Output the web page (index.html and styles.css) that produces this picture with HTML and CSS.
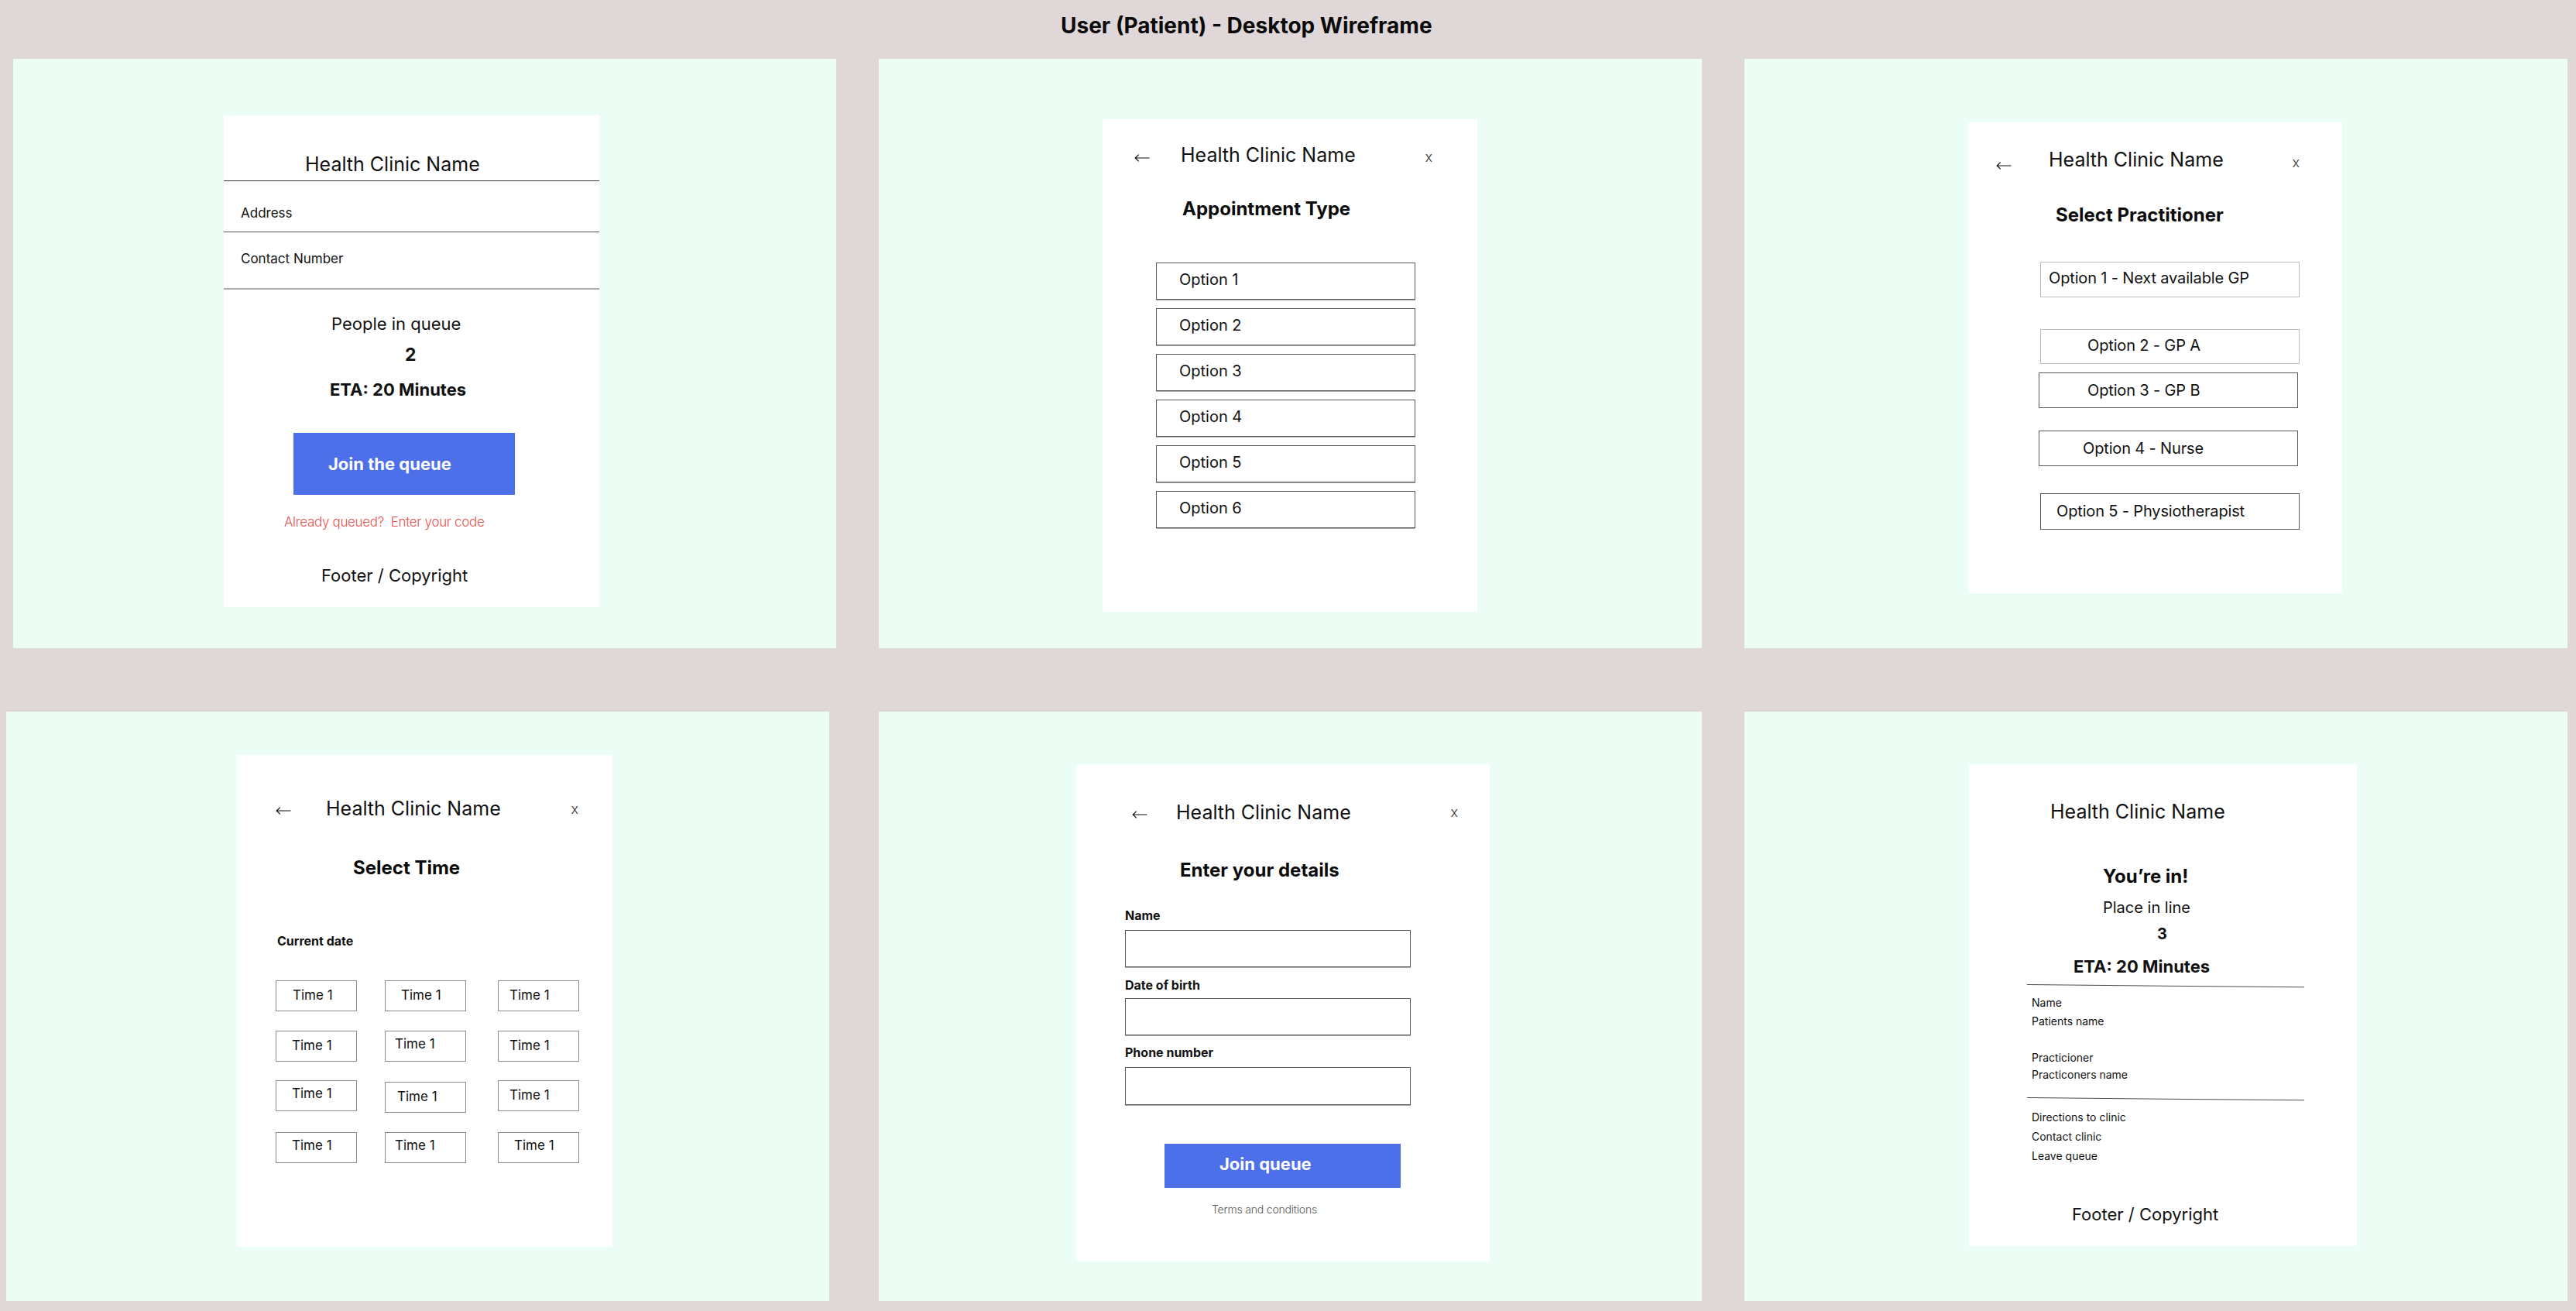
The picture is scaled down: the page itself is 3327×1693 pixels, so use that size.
FILE: index.html
```html
<!DOCTYPE html>
<html lang="en">
<head>
<meta charset="utf-8">
<title>User (Patient) - Desktop Wireframe</title>
<link rel="stylesheet" href="styles.css">
</head>
<body>
<h1 class="page-title">User (Patient) - Desktop Wireframe</h1>

<div class="row row-top">
  <section class="panel">
    <div class="card card-1">
      <div class="c1-title">Health Clinic Name</div>
      <div class="c1-row c1-address">Address</div>
      <div class="c1-row c1-contact">Contact Number</div>
      <div class="c1-people">People in queue</div>
      <div class="c1-count">2</div>
      <div class="eta c1-eta">ETA: 20 Minutes</div>
      <div class="btn c1-btn">Join the queue</div>
      <div class="c1-already">Already queued?&nbsp; Enter your code</div>
      <div class="footer c1-footer">Footer / Copyright</div>
    </div>
  </section>

  <section class="panel">
    <div class="card card-2">
      <div class="nav">
        <svg class="nav-back" viewBox="0 0 20 12"><path d="M19.5 6H1.2M5.8 1.6L1.2 6l4.6 4.4" fill="none" stroke="#111" stroke-width="1.2"/></svg>
        <span class="nav-title">Health Clinic Name</span>
        <span class="nav-close">x</span>
      </div>
      <div class="heading">Appointment Type</div>
      <div class="options">
        <div class="option">Option 1</div>
        <div class="option">Option 2</div>
        <div class="option">Option 3</div>
        <div class="option">Option 4</div>
        <div class="option">Option 5</div>
        <div class="option">Option 6</div>
      </div>
    </div>
  </section>

  <section class="panel">
    <div class="card card-3">
      <div class="nav">
        <svg class="nav-back" viewBox="0 0 20 12"><path d="M19.5 6H1.2M5.8 1.6L1.2 6l4.6 4.4" fill="none" stroke="#111" stroke-width="1.2"/></svg>
        <span class="nav-title">Health Clinic Name</span>
        <span class="nav-close">x</span>
      </div>
      <div class="heading">Select Practitioner</div>
      <div class="prac prac-1">Option 1 - Next available GP</div>
      <div class="prac prac-2">Option 2 - GP A</div>
      <div class="prac prac-3">Option 3 - GP B</div>
      <div class="prac prac-4">Option 4 - Nurse</div>
      <div class="prac prac-5">Option 5 - Physiotherapist</div>
    </div>
  </section>
</div>

<div class="row row-bottom">
  <section class="panel">
    <div class="card card-4">
      <div class="nav">
        <svg class="nav-back" viewBox="0 0 20 12"><path d="M19.5 6H1.2M5.8 1.6L1.2 6l4.6 4.4" fill="none" stroke="#111" stroke-width="1.2"/></svg>
        <span class="nav-title">Health Clinic Name</span>
        <span class="nav-close">x</span>
      </div>
      <div class="heading">Select Time</div>
      <div class="date-label">Current date</div>
      <div class="time-grid">
        <div class="time tp-22">Time 1</div>
        <div class="time tp-21">Time 1</div>
        <div class="time tp-15">Time 1</div>
        <div class="time tp-21">Time 1</div>
        <div class="time tp-13 tv-up">Time 1</div>
        <div class="time tp-15">Time 1</div>
        <div class="time tp-21 tv-up">Time 1</div>
        <div class="time tp-16 time-low">Time 1</div>
        <div class="time tp-15">Time 1</div>
        <div class="time tp-21 tv-up">Time 1</div>
        <div class="time tp-13 tv-up">Time 1</div>
        <div class="time tp-21 tv-up">Time 1</div>
      </div>
    </div>
  </section>

  <section class="panel">
    <div class="card card-5">
      <div class="nav">
        <svg class="nav-back" viewBox="0 0 20 12"><path d="M19.5 6H1.2M5.8 1.6L1.2 6l4.6 4.4" fill="none" stroke="#111" stroke-width="1.2"/></svg>
        <span class="nav-title">Health Clinic Name</span>
        <span class="nav-close">x</span>
      </div>
      <div class="heading">Enter your details</div>
      <div class="field-label fl-name">Name</div>
      <div class="field-input fi-name"></div>
      <div class="field-label fl-dob">Date of birth</div>
      <div class="field-input fi-dob"></div>
      <div class="field-label fl-phone">Phone number</div>
      <div class="field-input fi-phone"></div>
      <div class="btn c5-btn">Join queue</div>
      <div class="terms">Terms and conditions</div>
    </div>
  </section>

  <section class="panel">
    <div class="card card-6">
      <div class="c6-title">Health Clinic Name</div>
      <div class="heading">You’re in!</div>
      <div class="c6-place">Place in line</div>
      <div class="c6-count">3</div>
      <div class="eta c6-eta">ETA: 20 Minutes</div>
      <div class="divider dv-1"></div>
      <div class="detail d-name">Name</div>
      <div class="detail d-pname">Patients name</div>
      <div class="detail d-prac">Practicioner</div>
      <div class="detail d-pracname">Practiconers name</div>
      <div class="divider dv-2"></div>
      <div class="detail d-dir">Directions to clinic</div>
      <div class="detail d-contact">Contact clinic</div>
      <div class="detail d-leave">Leave queue</div>
      <div class="footer c6-footer">Footer / Copyright</div>
    </div>
  </section>
</div>
</body>
</html>
```

FILE: styles.css
```css
html, body {
  margin: 0;
  padding: 0;
}
body {
  width: 3327px;
  height: 1693px;
  overflow: hidden;
  background: #E0D8D8;
  font-family: Inter, "Noto Sans", "Liberation Sans", sans-serif;
  color: #111;
  white-space: nowrap;
}

.page-title {
  margin: 0;
  padding: 15px 0 25px 1370px;
  font-size: 28px;
  line-height: 36px;
  font-weight: 700;
  color: #0b0b0b;
}

.row {
  display: flex;
  gap: 55px;
}
.row-top { padding-left: 17px; }
.row-bottom { padding-left: 8px; margin-top: 82px; }
.row-bottom .panel:first-child { margin-right: 9px; }

.panel {
  flex: none;
  width: 1063px;
  height: 761px;
  background: #EBFDF5;
  display: flex;
  align-items: flex-start;
}

.card {
  flex: none;
  background: #fff;
  box-sizing: border-box;
  display: flex;
  flex-direction: column;
}
.card-1 { width: 485px; height: 635px; margin: 73px 0 0 272px; }
.card-2 { width: 484px; height: 636px; margin: 78px 0 0 289px; }
.card-3 { width: 483px; height: 608px; margin: 82px 0 0 289px; }
.card-4 { width: 485px; height: 635px; margin: 56px 0 0 298px; }
.card-5 { width: 534px; height: 642px; margin: 68px 0 0 255px; }
.card-6 { width: 501px; height: 622px; margin: 68px 0 0 290px; }

/* ---------- card 1 ---------- */
.c1-title {
  padding: 48px 0 6px 105px;
  font-size: 25px;
  line-height: 30px;
  border-bottom: 1px solid #333;
}
.c1-row {
  font-size: 17px;
  line-height: 24px;
  padding-left: 22px;
}
.c1-address {
  padding-top: 29px;
  padding-bottom: 12px;
  border-bottom: 1px solid #555;
}
.c1-contact {
  padding-top: 22px;
  padding-bottom: 26px;
  border-bottom: 2px solid #ababab;
}
.c1-people {
  margin-top: 30px;
  padding-left: 139px;
  font-size: 22px;
  line-height: 28px;
}
.c1-count {
  margin-top: 11px;
  padding-left: 234px;
  font-size: 23px;
  line-height: 30px;
  font-weight: 700;
}
.eta {
  font-size: 22px;
  line-height: 28px;
  font-weight: 700;
}
.c1-eta { margin-top: 16px; padding-left: 137px; }

.btn {
  box-sizing: border-box;
  background: #4D6FE9;
  color: #fff;
  font-weight: 700;
  font-size: 22px;
}
.c1-btn {
  margin: 42px 0 0 90px;
  width: 286px;
  height: 80px;
  line-height: 80px;
  padding-left: 45px;
}
.c1-already {
  margin-top: 23px;
  padding-left: 78px;
  font-size: 17px;
  line-height: 24px;
  font-weight: 300;
  letter-spacing: -0.33px;
  color: #E55252;
}
.footer {
  font-size: 22px;
  line-height: 30px;
}
.c1-footer { margin-top: 42px; padding-left: 126px; }

/* ---------- nav header ---------- */
.nav {
  display: flex;
  align-items: flex-start;
  height: 30px;
}
.nav-back {
  flex: none;
  width: 20px;
  height: 12px;
}
.nav-title {
  font-size: 25px;
  line-height: 30px;
}
.nav-close {
  margin-left: auto;
  font-size: 18px;
  line-height: 18px;
  font-weight: 300;
  color: #333;
}
.card-2 .nav { padding: 31px 58px 0 41px; }
.card-2 .nav-back { margin-top: 13px; }
.card-2 .nav-title { margin-left: 40px; }
.card-2 .nav-close { margin-top: 9px; }

.card-3 .nav { padding: 33px 55px 0 36px; }
.card-3 .nav-back { margin-top: 17px; }
.card-3 .nav-title { margin-left: 48px; }
.card-3 .nav-close { margin-top: 10px; }

.card-4 .nav { padding: 54px 44px 0 50px; }
.card-4 .nav-back { margin-top: 12px; }
.card-4 .nav-title { margin-left: 45px; }
.card-4 .nav-close { margin-top: 7px; }

.card-5 .nav { padding: 47px 41px 0 72px; }
.card-5 .nav-back { margin-top: 12px; }
.card-5 .nav-title { margin-left: 37px; }
.card-5 .nav-close { margin-top: 6px; }

.heading {
  font-size: 24px;
  line-height: 30px;
  font-weight: 700;
  color: #0b0b0b;
}
.card-2 .heading { margin-top: 40px; padding-left: 103px; }
.card-3 .heading { margin-top: 42px; padding-left: 113px; }
.card-4 .heading { margin-top: 47px; padding-left: 150px; }
.card-5 .heading { margin-top: 45px; padding-left: 134px; }
.card-6 .heading { margin-top: 54px; padding-left: 173px; }

/* ---------- card 2 ---------- */
.options {
  display: flex;
  flex-direction: column;
  gap: 11px;
  margin: 54px 0 0 69px;
}
.option {
  width: 335px;
  height: 48px;
  box-sizing: border-box;
  border: 1px solid #5a5a5a;
  box-shadow: 0 1px 0 #a8a8a8;
  font-size: 20px;
  line-height: 42px;
  padding-left: 29px;
}

/* ---------- card 3 ---------- */
.prac {
  width: 335px;
  height: 46px;
  box-sizing: border-box;
  border: 1px solid #5a5a5a;
  font-size: 20px;
  line-height: 41px;
  letter-spacing: -0.15px;
}
.prac-1 { margin: 45px 0 0 93px; padding-left: 10px; border-color: #bdbdbd; }
.prac-2 { margin: 41px 0 0 93px; padding-left: 60px; border-color: #bdbdbd; height: 45px; line-height: 40px; }
.prac-3 { margin: 11px 0 0 91px; padding-left: 62px; line-height: 44px; }
.prac-4 { margin: 29px 0 0 91px; padding-left: 56px; line-height: 44px; }
.prac-5 { margin: 35px 0 0 93px; padding-left: 20px; height: 47px; line-height: 45px; }

/* ---------- card 4 ---------- */
.date-label {
  margin-top: 69px;
  padding-left: 52px;
  font-size: 16px;
  line-height: 20px;
  font-weight: 700;
}
.time-grid {
  display: grid;
  grid-template-columns: 141px 146px 105px;
  row-gap: 24.5px;
  margin: 41px 0 0 50px;
}
.time {
  width: 105px;
  height: 40px;
  box-sizing: border-box;
  border: 1px solid #8c8c8c;
  font-size: 17px;
  line-height: 37px;
}
.time-low { margin-top: 2px; }
.tv-up { line-height: 33px; }
.tp-13 { padding-left: 12px; }
.tp-15 { padding-left: 14px; }
.tp-16 { padding-left: 15px; }
.tp-21 { padding-left: 20px; }
.tp-22 { padding-left: 21px; }

/* ---------- card 5 ---------- */
.field-label {
  padding-left: 63px;
  font-size: 16px;
  line-height: 20px;
  font-weight: 700;
}
.field-input {
  width: 369px;
  height: 48px;
  box-sizing: border-box;
  margin-left: 63px;
  border: 1px solid #5a5a5a;
  box-shadow: 0 1px 0 #a8a8a8;
}
.fl-name { margin-top: 33px; }
.fi-name { margin-top: 9px; }
.fl-dob { margin-top: 13px; }
.fi-dob { margin-top: 7px; }
.fl-phone { margin-top: 12px; }
.fi-phone { margin-top: 9px; height: 49px; }
.c5-btn {
  margin: 50px 0 0 114px;
  width: 305px;
  height: 57px;
  line-height: 52px;
  padding-left: 71px;
}
.terms {
  margin-top: 18px;
  padding-left: 175px;
  font-size: 14px;
  line-height: 20px;
  font-weight: 300;
  letter-spacing: -0.2px;
  color: #555;
}

/* ---------- card 6 ---------- */
.c6-title {
  padding: 46px 0 0 105px;
  font-size: 25px;
  line-height: 30px;
}
.c6-place {
  margin-top: 12px;
  padding-left: 173px;
  font-size: 20px;
  line-height: 26px;
}
.c6-count {
  margin-top: 8px;
  padding-left: 243px;
  font-size: 20px;
  line-height: 26px;
  font-weight: 700;
}
.c6-eta { margin-top: 15px; padding-left: 135px; }
.divider {
  flex: none;
  width: 358px;
  height: 1px;
  margin-left: 75px;
  background: #4a4a4a;
  transform: rotate(0.53deg);
  transform-origin: left center;
}
.dv-1 { margin-top: 9px; }
.dv-2 { margin-top: 20px; }
.detail {
  padding-left: 81px;
  font-size: 14px;
  line-height: 18px;
}
.d-name { margin-top: 14px; }
.d-pname { margin-top: 6px; }
.d-prac { margin-top: 29px; }
.d-pracname { margin-top: 4px; }
.d-dir { margin-top: 16px; }
.d-contact { margin-top: 7px; }
.d-leave { margin-top: 7px; }
.c6-footer { margin-top: 51px; padding-left: 133px; }
```
